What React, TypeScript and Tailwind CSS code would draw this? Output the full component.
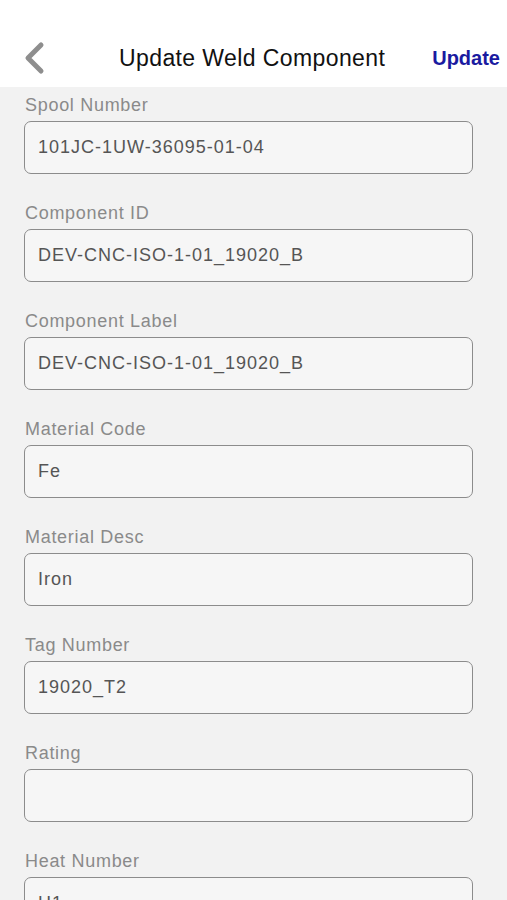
const fields = [
  { label: "Spool Number", value: "101JC-1UW-36095-01-04" },
  { label: "Component ID", value: "DEV-CNC-ISO-1-01_19020_B" },
  { label: "Component Label", value: "DEV-CNC-ISO-1-01_19020_B" },
  { label: "Material Code", value: "Fe" },
  { label: "Material Desc", value: "Iron" },
  { label: "Tag Number", value: "19020_T2" },
  { label: "Rating", value: "" },
  { label: "Heat Number", value: "H1" },
];

export default function App() {
  return (
    <div className="h-[900px] w-[507px] overflow-hidden bg-[#f2f2f2] font-['Liberation_Sans',Arial,sans-serif]">
      <header className="flex h-[87px] items-end bg-white pb-[12px]">
        <button type="button" className="ml-[22px] flex h-[34px] w-[24px] items-center">
          <svg width="24" height="34" viewBox="0 0 24 34">
            <path
              d="M19 4 L6 17 L19 30"
              fill="none"
              stroke="#8e8e8e"
              strokeWidth="5"
              strokeLinecap="round"
              strokeLinejoin="round"
            />
          </svg>
        </button>
        <h1 className="flex-1 pb-[2px] pl-[73px] text-[23px] tracking-[0.4px] leading-[30px] text-[#111]">
          Update Weld Component
        </h1>
        <button
          type="button"
          className="mr-[7px] pb-[3px] text-[20px] font-bold leading-[28px] text-[#1a1aa0]"
        >
          Update
        </button>
      </header>

      <main className="px-[24px] pt-[6px]">
        {fields.map((field) => (
          <div key={field.label} className="h-[108px]">
            <p className="pl-[1px] text-[18px] tracking-[0.7px] leading-[24px] text-[#8a8a8a]">
              {field.label}
            </p>
            <div className="mt-[4px] flex h-[53px] w-[449px] items-center rounded-[7px] border-[1.5px] border-[#8c8c8c] bg-[#f6f6f6] px-[13px] text-[18px] tracking-[1px] text-[#555]">
              {field.value}
            </div>
          </div>
        ))}
      </main>
    </div>
  );
}
